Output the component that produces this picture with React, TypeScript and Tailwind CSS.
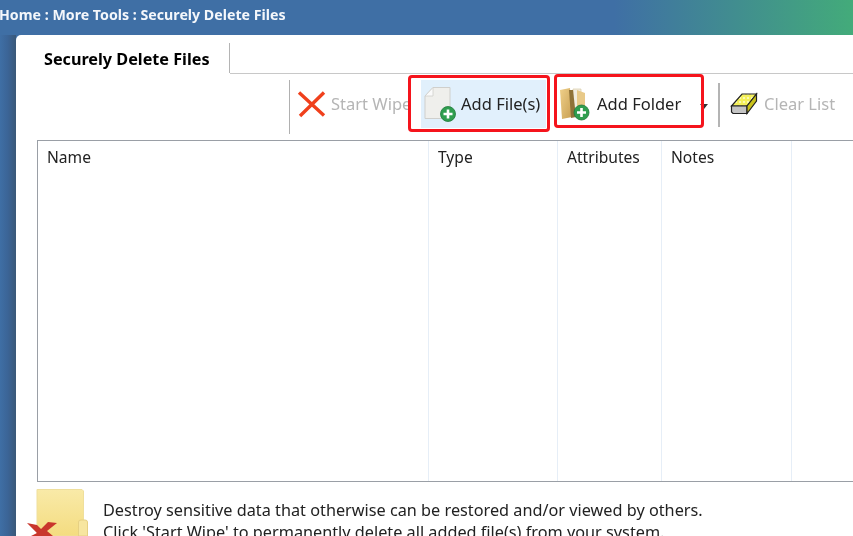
const font = { fontFamily: '"Noto Sans", "Open Sans", sans-serif' };

function XIcon() {
  return (
    <svg width="30" height="28" viewBox="0 0 30 28" className="shrink-0">
      <path d="M2 2.5 L27 25.5 M27 2.5 L3 26" stroke="#f0401c" strokeWidth="3.4" fill="none" />
    </svg>
  );
}

function Plus({ cx, cy }: { cx: number; cy: number }) {
  return (
    <g>
      <circle cx={cx} cy={cy} r="7.5" fill="#2f9e4f" stroke="#1e7a3a" strokeWidth="0.8" />
      <path d={`M${cx - 4.5} ${cy} H${cx + 4.5} M${cx} ${cy - 4.5} V${cy + 4.5}`} stroke="#fff" strokeWidth="2.6" />
    </g>
  );
}

function FileIcon() {
  return (
    <svg width="34" height="36" viewBox="0 0 34 36" className="shrink-0">
      <path d="M2 10 L10 1.5 H27 V32.5 H2 Z" fill="#efefec" stroke="#cfcfcc" strokeWidth="1" />
      <path d="M2 10 H10 V1.5 Z" fill="#fafafa" stroke="#cfcfcc" strokeWidth="0.8" />
      <Plus cx={25} cy={28} />
    </svg>
  );
}

function FolderIcon() {
  return (
    <svg width="32" height="34" viewBox="0 0 32 34" className="shrink-0">
      <defs>
        <linearGradient id="fold" x1="0" x2="1" y1="0" y2="1">
          <stop offset="0" stopColor="#efd08a" />
          <stop offset="1" stopColor="#c99f52" />
        </linearGradient>
      </defs>
      <path d="M14 2 H22 V27 H14 Z" fill="#f1ecdf" stroke="#d8cca8" strokeWidth="0.7" />
      <path d="M18 3 L26 6 V24 L18 28 Z" fill="#e8c988" />
      <path d="M1 3 L11 1 L13 30 L3 32 Z" fill="url(#fold)" />
      <path d="M10 3 L14 3 L17 30 L12 31 Z" fill="#8f7238" />
      <Plus cx={22.5} cy={25.5} />
    </svg>
  );
}

function EraserIcon() {
  return (
    <svg width="28" height="24" viewBox="0 0 28 24" className="shrink-0">
      <defs>
        <pattern id="dots" width="4" height="4" patternUnits="userSpaceOnUse">
          <rect width="4" height="4" fill="#f4f05a" />
          <circle cx="2" cy="2" r="1" fill="#fdfdd0" />
        </pattern>
      </defs>
      <path d="M1.5 14 L12 2 H26.5 L17 14 Z" fill="url(#dots)" stroke="#222" strokeWidth="1.2" />
      <path d="M1.5 14 H17 V21.5 H3 L1.5 20 Z" fill="#c4c4c4" stroke="#222" strokeWidth="1.2" />
      <path d="M17 14 L26.5 2 V9 L17 21.5 Z" fill="#c9c21a" stroke="#222" strokeWidth="1.2" />
    </svg>
  );
}

function BigFolder() {
  return (
    <svg width="62" height="48" viewBox="0 0 62 48" className="shrink-0">
      <defs>
        <linearGradient id="big" x1="0" x2="0" y1="0" y2="1">
          <stop offset="0" stopColor="#f9eaa8" />
          <stop offset="1" stopColor="#f4dc80" />
        </linearGradient>
      </defs>
      <path d="M10 0.5 H55 L56.5 2 V47 H10 Z" fill="url(#big)" stroke="#efdf9c" strokeWidth="1" />
      <path d="M51.5 33 Q51.5 31 54 31 H58 Q60.5 31 60.5 33 V47 H51.5 Z" fill="#f7e6a0" stroke="#e6d083" strokeWidth="1" />
      <path d="M0 34 L10 36 L14 40 L21 33 L30 34 L20 42 L26 47 H4 L10 44 Z" fill="#c9362c" />
    </svg>
  );
}

const columns = [
  { name: 'Name', w: 'w-[391px]' },
  { name: 'Type', w: 'w-[129px]' },
  { name: 'Attributes', w: 'w-[104px]' },
  { name: 'Notes', w: 'w-[130px]' },
];

export default function App() {
  return (
    <div
      style={font}
      className="w-[853px] h-[536px] overflow-hidden flex flex-col bg-[linear-gradient(90deg,#3f6fa5_0%,#3f6fa5_72%,#43ab7a_100%)]"
    >
      <div className="h-[35px] shrink-0 pt-[5px] -ml-[1px] text-[14.2px] leading-[20px] font-bold text-[#f4f7fb] whitespace-nowrap blur-[0.4px]">
        Home : More Tools : Securely Delete Files
      </div>
      <div className="flex-1 min-h-0 flex">
        <div className="w-[16px] shrink-0 bg-[linear-gradient(90deg,#3f6fa5_0%,#3b6496_50%,#3a5878_100%)]" />
        <div className="relative flex-1 min-w-0 bg-white rounded-tl-[5px] flex flex-col">
          <div className="h-[39px] shrink-0 flex">
            <div className="w-[214px] h-[30px] mt-[8px] shrink-0 pl-[28px] pt-[4px] text-[16.2px] leading-[24px] font-bold text-black whitespace-nowrap border-r border-[#b4b4b4] blur-[0.4px]">
              Securely Delete Files
            </div>
            <div className="flex-1 border-b border-[#c8c8c8]" />
          </div>

          <div className="h-[66px] shrink-0 flex items-center pl-[273px] text-[16.5px] whitespace-nowrap">
            <div className="w-px h-[54px] bg-[#b0b0b0] shrink-0" />
            <div className="w-[119px] shrink-0 flex items-center pl-[7px] gap-[4px] text-[#b5b5b5] overflow-hidden -mt-[6px] blur-[0.4px]">
              <XIcon />
              <span>Start Wipe</span>
            </div>
            <div className="ml-[12px] w-[125px] h-[48px] shrink-0 -mt-[6px] flex items-center pl-[2px] gap-[4px] bg-[#e1f0fc] text-[#222]">
              <FileIcon />
              <span className="blur-[0.4px]">Add File(s)</span>
            </div>
            <div className="ml-[13px] w-[159px] shrink-0 flex items-center gap-[5px] text-[#222] -mt-[6px]">
              <FolderIcon />
              <span className="ml-[1px] blur-[0.4px]">Add Folder</span>
              <span className="ml-[14px] mt-[5px] w-0 h-0 border-x-[4px] border-x-transparent border-t-[5px] border-t-[#333]" />
            </div>
            <div className="w-[2px] h-[44px] bg-[#b4b4b4] shrink-0 -mt-[4px]" />
            <div className="flex items-center pl-[10px] gap-[6px] text-[#b5b5b5] -mt-[6px]">
              <EraserIcon />
              <span className="blur-[0.4px]">Clear List</span>
            </div>
          </div>

          <div className="ml-[21px] h-[342px] shrink-0 border border-r-0 border-[#9a9fa6] flex bg-white">
            {columns.map((c) => (
              <div key={c.name} className={`${c.w} shrink-0 border-r border-[#e6eef7] pl-[9px] pt-[5px] text-[15.6px] leading-[22px] text-[#222] blur-[0.4px]`}>
                {c.name}
              </div>
            ))}
          </div>

          <div className="flex pt-[7px] pl-[11px] flex-1 min-h-0">
            <BigFolder />
            <div className="pl-[14px] pt-[10px] text-[16.26px] leading-[22px] text-[#222] whitespace-nowrap blur-[0.4px]">
              <div>Destroy sensitive data that otherwise can be restored and/or viewed by others.</div>
              <div>Click 'Start Wipe' to permanently delete all added file(s) from your system.</div>
            </div>
          </div>

          <div className="absolute left-[392px] top-[40px] w-[142px] h-[57px] border-[3px] border-[#f5141c] rounded-[4px]" />
          <div className="absolute left-[538px] top-[39px] w-[150px] h-[54px] border-[3px] border-[#f5141c] rounded-[4px]" />
        </div>
      </div>
    </div>
  );
}
